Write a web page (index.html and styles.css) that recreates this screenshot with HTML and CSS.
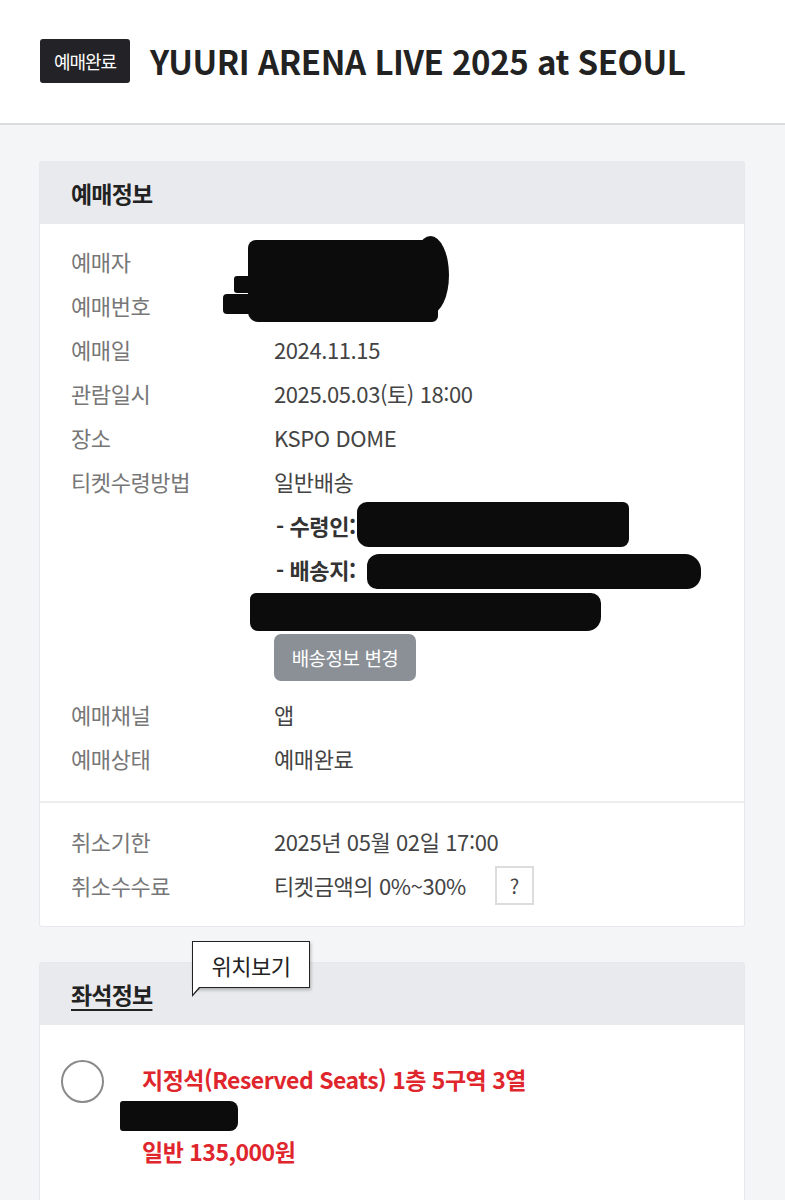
FILE: index.html
```html
<!DOCTYPE html>
<html lang="ko">
<head>
<meta charset="utf-8">
<title>YUURI ARENA LIVE 2025 at SEOUL</title>
<link rel="stylesheet" href="styles.css">
</head>
<body>
<header class="header">
  <span class="badge">예매완료</span>
  <h1 class="title">YUURI ARENA LIVE 2025 at SEOUL</h1>
</header>
<main class="main">
  <section class="card">
    <div class="card-head">예매정보</div>
    <div class="card-body">
      <div class="group">
        <div class="row"><span class="label">예매자</span><span class="value"></span></div>
        <div class="row"><span class="label">예매번호</span><span class="value"></span></div>
        <div class="row"><span class="label">예매일</span><span class="value">2024.11.15</span></div>
        <div class="row"><span class="label">관람일시</span><span class="value">2025.05.03(토) 18:00</span></div>
        <div class="row"><span class="label">장소</span><span class="value">KSPO DOME</span></div>
        <div class="row row-top">
          <span class="label line">티켓수령방법</span>
          <div class="value-col">
            <div class="line">일반배송</div>
            <div class="line sub"><b>- 수령인:</b></div>
            <div class="line sub"><b>- 배송지:</b></div>
            <div class="line"></div>
            <button class="btn" type="button">배송정보 변경</button>
          </div>
        </div>
        <div class="row"><span class="label">예매채널</span><span class="value">앱</span></div>
        <div class="row"><span class="label">예매상태</span><span class="value">예매완료</span></div>
        <span class="redact r1a"></span>
        <span class="redact r1b"></span>
        <span class="redact r1c"></span>
        <span class="redact r1d"></span>
        <span class="redact r2"></span>
        <span class="redact r3"></span>
        <span class="redact r4"></span>
      </div>
      <div class="group group-cancel">
        <div class="row"><span class="label">취소기한</span><span class="value">2025년 05월 02일 17:00</span></div>
        <div class="row"><span class="label">취소수수료</span><span class="value">티켓금액의 0%~30%<span class="qbox">?</span></span></div>
      </div>
    </div>
  </section>

  <section class="card card-seat">
    <div class="card-head"><span class="ul">좌석정보</span></div>
    <div class="tooltip">위치보기</div>
    <div class="seat-body">
      <span class="radio"></span>
      <div class="seat-info">
        <div class="seat-line">지정석(Reserved Seats) 1층 5구역 3열</div>
        <div class="seat-line"><span class="redact r5"></span></div>
        <div class="seat-line">일반 135,000원</div>
      </div>
    </div>
  </section>
</main>
</body>
</html>
```

FILE: styles.css
```css
* { box-sizing: border-box; }
html, body { margin: 0; padding: 0; }
body {
  background: #f4f5f7;
  font-family: "Noto Sans CJK KR", "Noto Sans", sans-serif;
  color: #333;
  width: 785px;
  height: 1200px;
  overflow: hidden;
}
.header {
  height: 125px;
  background: #fff;
  border-bottom: 2px solid #dcdcde;
  display: flex;
  align-items: center;
  padding: 0 0 2px 40px;
  gap: 20px;
}
.badge {
  display: inline-flex;
  align-items: center;
  justify-content: center;
  width: 90px;
  height: 44px;
  background: #232226;
  color: #fff;
  border-radius: 3px;
  font-size: 18px;
  letter-spacing: -1px;
}
.title {
  margin: 0;
  font-size: 33px;
  font-weight: 700;
  color: #222;
  letter-spacing: -0.45px;
}
.main {
  padding: 37px 41px 0 40px;
}
.card {
  background: #fff;
  box-shadow: 0 0 0 1px #e7e8eb;
  border-radius: 2px;
  position: relative;
}
.card-head {
  height: 62px;
  background: #e9eaed;
  padding-left: 31px;
  display: flex;
  align-items: center;
  font-size: 23px;
  font-weight: 700;
  color: #222;
  letter-spacing: -0.8px;
}
.card-body { position: relative; }
.group {
  position: relative;
  padding: 15px 31px 21px;
}
.group-cancel {
  border-top: 2px solid #ececee;
  padding: 16px 31px 19px;
}
.row {
  display: flex;
  align-items: center;
  min-height: 44px;
  font-size: 22px;
  letter-spacing: -0.4px;
}
.row-top { align-items: flex-start; }
.label {
  width: 203px;
  flex: none;
  color: #777;
}
.value {
  color: #444;
  display: flex;
  align-items: center;
}
.value-col {
  color: #444;
  display: flex;
  flex-direction: column;
  align-items: flex-start;
}
.line {
  height: 44px;
  line-height: 44px;
}
.line.sub { padding-left: 2px; }
.line b { color: #333; font-weight: 700; }
.btn {
  margin-top: -1px;
  margin-bottom: 11px;
  width: 142px;
  height: 47px;
  border: 0;
  border-radius: 7px;
  background: #8b9097;
  color: #fff;
  font-family: inherit;
  font-size: 19px;
  letter-spacing: -0.5px;
  padding: 0;
}
.qbox {
  display: inline-flex;
  align-items: center;
  justify-content: center;
  width: 39px;
  height: 39px;
  margin-left: 29px;
  border: 2px solid #dcdcdc;
  color: #444;
  font-size: 20px;
  letter-spacing: 0;
}
.redact {
  position: absolute;
  background: #0c0c0c;
  display: block;
}
.r1a { left: 208px; top: 16px; width: 190px; height: 82px; border-radius: 8px 4px 6px 10px; }
.r1b { left: 372px; top: 12px; width: 37px; height: 78px; border-radius: 50%; }
.r1c { left: 183px; top: 70px; width: 36px; height: 20px; border-radius: 4px; }
.r1d { left: 194px; top: 52px; width: 26px; height: 17px; border-radius: 3px; }
.r2 { left: 317px; top: 278px; width: 272px; height: 45px; border-radius: 10px 6px 8px 12px; }
.r3 { left: 327px; top: 330px; width: 334px; height: 35px; border-radius: 12px 16px 14px 10px; }
.r4 { left: 210px; top: 369px; width: 351px; height: 38px; border-radius: 6px 10px 14px 8px; }

.card-seat {
  margin-top: 37px;
  height: 240px;
}
.ul {
  text-decoration: underline;
  text-underline-offset: 5px;
  text-decoration-thickness: 2px;
}
.tooltip {
  position: absolute;
  left: 152px;
  top: -22px;
  width: 118px;
  height: 47px;
  background: #fff;
  border: 1.5px solid #222;
  box-shadow: 1px 2px 3px rgba(0,0,0,0.25);
  display: flex;
  align-items: center;
  justify-content: center;
  font-size: 22px;
  color: #222;
  letter-spacing: -0.5px;
}
.tooltip::before {
  content: "";
  position: absolute;
  left: -1.5px;
  bottom: -10px;
  border-left: 9px solid #222;
  border-bottom: 10px solid transparent;
}
.tooltip::after {
  content: "";
  position: absolute;
  left: 0;
  bottom: -7px;
  border-left: 6px solid #fff;
  border-bottom: 7px solid transparent;
}
.seat-body {
  display: flex;
  padding: 35px 0 0 21px;
  gap: 38px;
}
.radio {
  width: 43px;
  height: 43px;
  border: 2px solid #8a8a8a;
  border-radius: 50%;
  flex: none;
}
.seat-info {
  display: flex;
  flex-direction: column;
  color: #e0262d;
  font-size: 23px;
  font-weight: 700;
  letter-spacing: -0.5px;
  margin-top: 1px;
}
.seat-line {
  height: 36px;
  line-height: 36px;
  position: relative;
}
.r5 { left: -22px; top: 4px; width: 118px; height: 30px; border-radius: 3px 8px 8px 3px; }
```
